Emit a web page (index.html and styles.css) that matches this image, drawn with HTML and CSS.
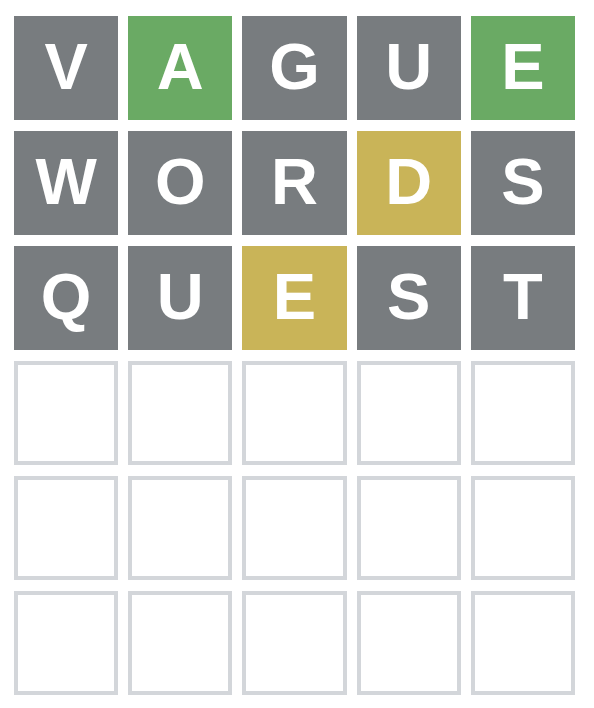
FILE: index.html
```html
<!DOCTYPE html>
<html>
<head>
<meta charset="utf-8">
<link rel="stylesheet" href="styles.css">
</head>
<body>
<div class="board">
  <div class="tile absent">V</div><div class="tile correct">A</div><div class="tile absent">G</div><div class="tile absent">U</div><div class="tile correct">E</div>
  <div class="tile absent">W</div><div class="tile absent">O</div><div class="tile absent">R</div><div class="tile present">D</div><div class="tile absent">S</div>
  <div class="tile absent">Q</div><div class="tile absent">U</div><div class="tile present">E</div><div class="tile absent">S</div><div class="tile absent">T</div>
  <div class="tile empty"></div><div class="tile empty"></div><div class="tile empty"></div><div class="tile empty"></div><div class="tile empty"></div>
  <div class="tile empty"></div><div class="tile empty"></div><div class="tile empty"></div><div class="tile empty"></div><div class="tile empty"></div>
  <div class="tile empty"></div><div class="tile empty"></div><div class="tile empty"></div><div class="tile empty"></div><div class="tile empty"></div>
</div>
</body>
</html>
```

FILE: styles.css
```css
html, body {
  margin: 0;
  padding: 0;
  background: #ffffff;
}
.board {
  margin: 16px 0 0 14px;
  width: 561px;
  display: grid;
  grid-template-columns: repeat(5, 1fr);
  grid-template-rows: repeat(6, 104px);
  column-gap: 10px;
  row-gap: 11px;
}
.tile {
  box-sizing: border-box;
  display: flex;
  align-items: center;
  justify-content: center;
  font-family: "Liberation Sans", Arial, sans-serif;
  font-weight: bold;
  font-size: 65px;
  line-height: 1;
  color: #ffffff;
  padding-bottom: 3px;
}
.absent { background: #787c7f; }
.correct { background: #6aaa64; }
.present { background: #c9b458; }
.empty {
  background: #ffffff;
  border: 4px solid #d3d6da;
}
```
